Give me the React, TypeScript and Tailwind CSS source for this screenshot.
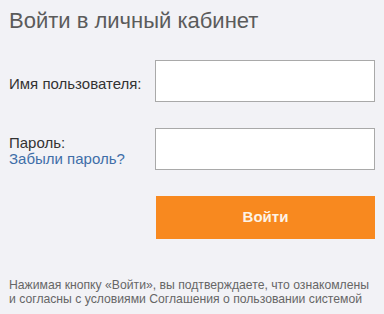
export default function App() {
  return (
    <div
      className="h-[314px] w-[384px] bg-[#f2f2f6] px-[9px] pt-[8px]"
      style={{ fontFamily: '"Liberation Sans", Arial, sans-serif' }}
    >
      <h1 className="text-[22px] leading-[25px] text-[#5b5b5b]">Войти в личный кабинет</h1>

      <form className="mt-[27px] flex flex-col gap-[26px]" onSubmit={(e) => e.preventDefault()}>
        <div className="flex items-start">
          <label className="mt-[16px] w-[147px] text-[15px] leading-[16px] text-[#333]">
            Имя пользователя:
          </label>
          <input
            type="text"
            className="h-[42px] w-[220px] border border-[#a9a9a9] bg-white px-2 outline-none"
          />
        </div>

        <div className="flex items-start">
          <div className="mt-[7px] w-[147px] text-[15px] leading-[16px]">
            <label className="block text-[#333]">Пароль:</label>
            <a href="#" className="block text-[#3f6ea8]">
              Забыли пароль?
            </a>
          </div>
          <input
            type="password"
            className="h-[42px] w-[220px] border border-[#a9a9a9] bg-white px-2 outline-none"
          />
        </div>

        <div className="flex">
          <div className="w-[147px]" />
          <button
            type="submit"
            className="h-[43px] w-[219px] bg-[#f8891f] text-[15px] font-bold text-[#fdf3e6]"
          >
            Войти
          </button>
        </div>
      </form>

      <p className="mt-[39px] text-[12.2px] leading-[14px] text-[#666]">
        Нажимая кнопку «Войти», вы подтверждаете, что ознакомлены
        <br />
        и согласны с условиями Соглашения о пользовании системой
      </p>
    </div>
  )
}
